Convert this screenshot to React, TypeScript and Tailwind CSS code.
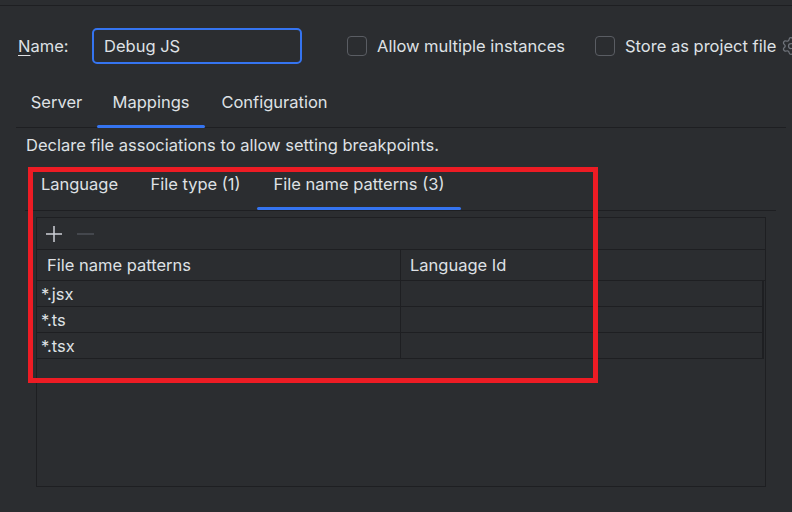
import { Settings } from "lucide-react";

const patterns = ["*.jsx", "*.ts", "*.tsx"];

export default function App() {
  return (
    <div className="relative h-[512px] w-[792px] overflow-hidden bg-[#2b2d30] font-['Inter','Noto_Sans',sans-serif] text-[16.5px] text-[#dfe1e5]">
      <div className="h-[5px]" />
      <div className="border-t border-[#1e1f22]" />

      {/* name row */}
      <div className="mt-[22px] flex h-[36px] items-center whitespace-nowrap pl-[18px]">
        <label className="w-[74px] shrink-0">
          <span className="underline underline-offset-[3px]">N</span>ame:
        </label>
        <div className="flex h-[36px] w-[210px] shrink-0 items-center rounded-[5px] border-2 border-[#3574f0] px-[10px]">Debug JS</div>
        <span className="ml-[45px] h-[20px] w-[20px] shrink-0 rounded-[4px] border border-[#5a5d63]" />
        <span className="ml-[10px] w-[218px] shrink-0">Allow multiple instances</span>
        <span className="h-[20px] w-[20px] shrink-0 rounded-[4px] border border-[#5a5d63]" />
        <span className="ml-[10px] w-[156px] shrink-0">Store as project file</span>
        <Settings size={20} strokeWidth={1.5} className="shrink-0 text-[#6f737a]" />
      </div>

      {/* main tabs */}
      <div className="ml-[16px] mt-[16px] flex h-[48px] w-[770px] items-center border-b border-[#1e1f22] pb-[3px]">
        <div className="w-[81px] text-center">Server</div>
        <div className="relative flex h-full w-[108px] items-center justify-center">
          Mappings
          <span className="absolute -bottom-[4px] left-0 h-[3px] w-full rounded-full bg-[#3574f0]" />
        </div>
        <div className="w-[139px] text-center">Configuration</div>
      </div>

      <div className="ml-[26px] flex h-[34px] items-center">Declare file associations to allow setting breakpoints.</div>

      {/* mapping tabs */}
      <div className="ml-[25px] flex h-[49px] w-[751px] items-center border-b border-[#1e1f22] pb-[4px]">
        <div className="w-[109px] text-center">Language</div>
        <div className="w-[123px] text-center">File type (1)</div>
        <div className="relative flex h-full w-[204px] items-center justify-center">
          File name patterns (3)
          <span className="absolute -bottom-[4px] left-0 h-[3px] w-full rounded-full bg-[#3574f0]" />
        </div>
      </div>

      {/* table */}
      <div className="ml-[36px] mt-[6px] h-[270px] w-[730px] border border-[#1e1f22]">
        <div className="flex h-[32px] items-center gap-[14px] border-b border-[#1e1f22] pl-[8px]">
          <svg width="18" height="18" viewBox="0 0 18 18" className="text-[#ced0d6]">
            <path d="M9 1v16M1 9h16" stroke="currentColor" strokeWidth="1.5" />
          </svg>
          <svg width="17" height="18" viewBox="0 0 17 18" className="text-[#4e5157]">
            <path d="M0 9h17" stroke="currentColor" strokeWidth="1.5" />
          </svg>
        </div>
        <div className="flex h-[31px] items-center border-b border-[#1e1f22]">
          <div className="flex h-full w-[364px] items-center border-r border-[#1e1f22] pl-[10px]">File name patterns</div>
          <div className="pl-[9px]">Language Id</div>
        </div>
        <div className="w-[727px] border-r-2 border-[#1e1f22]">
          {patterns.map((p) => (
            <div key={p} className="flex h-[26px] items-center border-b border-[#1e1f22]">
              <div className="flex h-full w-[364px] items-center border-r border-[#1e1f22] pl-[4px] pt-[2px]">{p}</div>
              <div className="flex-1" />
            </div>
          ))}
        </div>
      </div>

      {/* annotation */}
      <div className="absolute left-[28px] top-[167px] h-[216px] w-[570px] border-[5px] border-[#ed1c24]" />
    </div>
  );
}
